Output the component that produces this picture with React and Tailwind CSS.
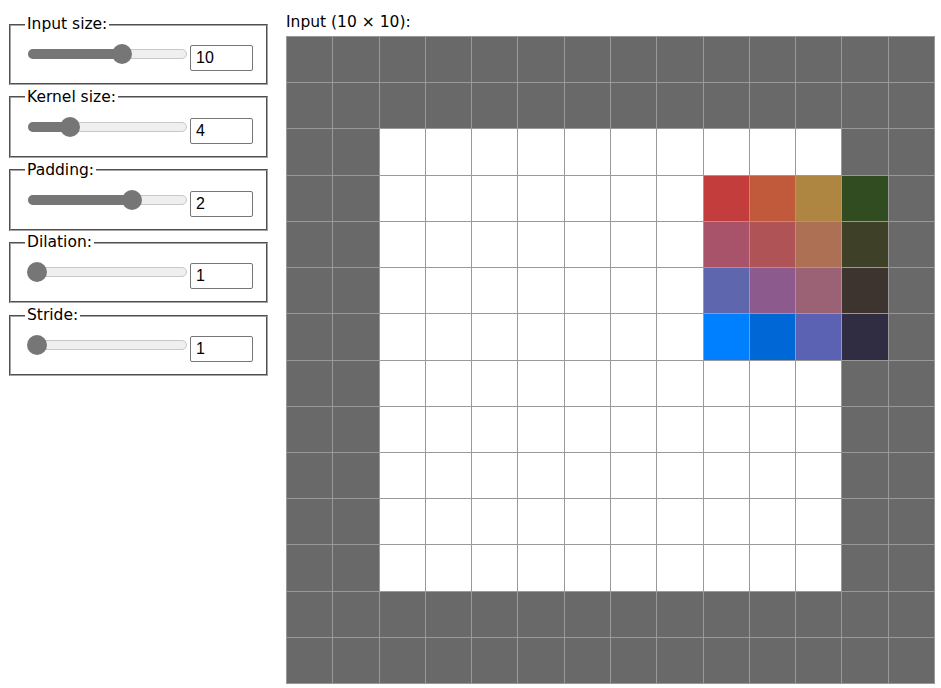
import React from "react";

const controls = [
  { label: "Input size:", value: "10", thumb: 95 },
  { label: "Kernel size:", value: "4", thumb: 43 },
  { label: "Padding:", value: "2", thumb: 105 },
  { label: "Dilation:", value: "1", thumb: 10 },
  { label: "Stride:", value: "1", thumb: 10 },
];

const kernel = [
  ["#c43d3d", "#c05a3a", "#ae8541", "#304c20"],
  ["#a8536a", "#b05357", "#ae7054", "#3e4027"],
  ["#5e67ad", "#8c5a8c", "#9b6276", "#3d3430"],
  ["#0080ff", "#0068d6", "#5b61b3", "#302c42"],
];

function Slider({ thumb }) {
  return (
    <div className="relative w-[160px] h-[20px] -mt-px shrink-0">
      <div className="absolute left-px right-0 top-[5px] h-[10px] rounded-full bg-[#efefef] border border-[#c8c8c8]" />
      <div
        className="absolute left-px top-[5px] h-[10px] rounded-full bg-[#767676]"
        style={{ width: thumb }}
      />
      <div
        className="absolute top-0 w-[20px] h-[20px] rounded-full bg-[#767676]"
        style={{ left: thumb - 10 }}
      />
    </div>
  );
}

function Control({ label, value, thumb }) {
  return (
    <fieldset className="w-[259px] border-2 [border-style:groove] border-[#a4a4a4] m-0 p-0">
      <legend className="ml-[14px] px-[2px] leading-[19px]">{label}</legend>
      <div className="flex items-start pl-[16px] pt-[11px] pb-[12px]">
        <Slider thumb={thumb} />
        <input
          type="text"
          defaultValue={value}
          className="ml-[3px] w-[63px] h-[26px] border border-[#767676] rounded-[2px] px-[5px] text-[16px] font-['Liberation_Sans',Arial,sans-serif] text-black outline-none bg-white"
        />
      </div>
    </fieldset>
  );
}

export default function App() {
  const cells = [];
  for (let r = 0; r < 14; r++) {
    for (let c = 0; c < 14; c++) {
      let color = "#696969";
      if (r >= 2 && r <= 11 && c >= 2 && c <= 11) color = "#ffffff";
      if (r >= 3 && r <= 6 && c >= 9 && c <= 12) color = kernel[r - 3][c - 9];
      cells.push(<div key={`${r}-${c}`} style={{ backgroundColor: color }} />);
    }
  }
  return (
    <div className="flex font-['DejaVu_Sans',sans-serif] text-[15.5px] text-black bg-white w-[941px] h-[688px] overflow-hidden">
      <div className="flex flex-col gap-[2.75px] pl-[9px] pt-[15px] w-[286px] shrink-0">
        {controls.map((c) => (
          <Control key={c.label} {...c} />
        ))}
      </div>
      <div className="pt-[13px]">
        <div className="leading-[19px] mb-[4px]">Input (10 × 10):</div>
        <div className="grid grid-cols-[repeat(14,minmax(0,1fr))] grid-rows-[repeat(14,minmax(0,1fr))] gap-px p-px bg-[#999999] w-[649px] h-[648px]">
          {cells}
        </div>
      </div>
    </div>
  );
}
